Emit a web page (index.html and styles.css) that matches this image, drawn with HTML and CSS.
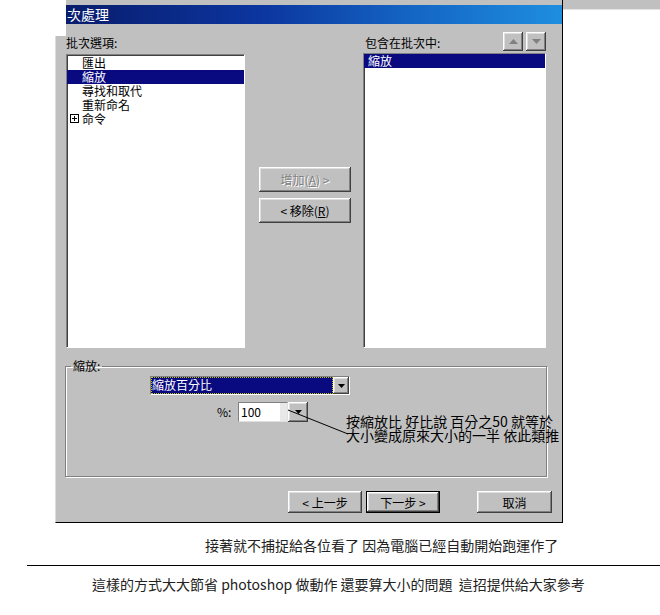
FILE: index.html
```html
<!DOCTYPE html>
<html lang="zh-Hant">
<head>
    <meta charset="UTF-8">
    <title>批次處理</title>
    <link rel="stylesheet" href="styles.css">
</head>
<body>
    <div class="screen">
        <div class="top">
            <div class="dialog">
                <div class="notch"></div>
                <div class="titlebar">次處理</div>
                <div class="dialog-body">
                    <div class="lists">
                        <div class="col">
                            <div class="label">批次選項:</div>
                            <ul class="listbox list-left">
                                <li>匯出</li>
                                <li class="selected">縮放</li>
                                <li>尋找和取代</li>
                                <li>重新命名</li>
                                <li class="group">
                                    <svg class="plus" width="9" height="9" viewBox="0 0 9 9">
                                        <rect x="0.5" y="0.5" width="8" height="8" fill="#fff" stroke="#000"/>
                                        <path d="M2 4.5h5M4.5 2v5" stroke="#000"/>
                                    </svg>命令
                                </li>
                            </ul>
                        </div>
                        <div class="col middle">
                            <button class="btn disabled">增加(<u>A</u>) &gt;</button>
                            <button class="btn">&lt; 移除(<u>R</u>)</button>
                        </div>
                        <div class="col">
                            <div class="list-head">
                                <span class="label">包含在批次中:</span>
                                <div class="arrows">
                                    <button class="arrow-btn">
                                        <svg width="9" height="5" viewBox="0 0 9 5"><path d="M0 5L4.5 0L9 5Z" fill="#808080"/></svg>
                                    </button>
                                    <button class="arrow-btn">
                                        <svg width="9" height="5" viewBox="0 0 9 5"><path d="M0 0L9 0L4.5 5Z" fill="#808080"/></svg>
                                    </button>
                                </div>
                            </div>
                            <ul class="listbox list-right">
                                <li class="selected">縮放</li>
                            </ul>
                        </div>
                    </div>

                    <fieldset class="group-box">
                        <legend>縮放:</legend>
                        <div class="combo">
                            <div class="combo-value">縮放百分比</div>
                            <div class="drop-btn">
                                <svg width="7" height="4" viewBox="0 0 7 4"><path d="M0 0H7L3.5 4Z" fill="#000"/></svg>
                            </div>
                        </div>
                        <div class="percent-row">
                            <span class="percent-label">%:</span>
                            <div class="input">100</div>
                            <div class="drop-btn spin">
                                <svg width="7" height="4" viewBox="0 0 7 4"><path d="M0 0H7L3.5 4Z" fill="#000"/></svg>
                            </div>
                            <svg class="pointer" width="70" height="30" viewBox="0 0 70 30">
                                <line x1="0" y1="1" x2="60" y2="25" stroke="#000" stroke-width="1"/>
                            </svg>
                            <div class="note">
                                <div>按縮放比 好比說 百分之50 就等於</div>
                                <div>大小變成原來大小的一半 依此類推</div>
                            </div>
                        </div>
                    </fieldset>

                    <div class="footer-buttons">
                        <button class="btn wide">&lt; 上一步</button>
                        <button class="btn wide default">下一步 &gt;</button>
                        <button class="btn wide cancel">取消</button>
                    </div>
                </div>
            </div>
            <div class="right-strip"><div class="strip"></div></div>
        </div>

        <p class="caption">接著就不捕捉給各位看了 因為電腦已經自動開始跑運作了</p>
        <hr class="divider">
        <p class="caption second">這樣的方式大大節省 photoshop 做動作 還要算大小的問題&nbsp; 這招提供給大家參考</p>
    </div>
</body>
</html>
```

FILE: styles.css
```css
/* General */
body {
    margin: 0;
    background-color: #fff;
    font-family: "Noto Sans CJK TC", "Liberation Sans", sans-serif;
    color: #000;
}

.screen {
    width: 660px;
    height: 615px;
    overflow: hidden;
}

.top {
    display: flex;
    align-items: flex-start;
}

/* Dialog window */
.dialog {
    position: relative;
    width: 508px;
    margin-left: 55px;
    box-sizing: border-box;
    padding-top: 5px;
    background-color: #c0c0c0;
    border-left: 1px solid #dcdcdc;
    border-right: 1px solid #000;
    border-bottom: 1px solid #000;
    font-size: 12px;
}

.notch {
    position: absolute;
    top: 0;
    left: -1px;
    width: 11px;
    height: 36px;
    background-color: #fff;
}

.titlebar {
    margin-left: 10px;
    height: 19px;
    line-height: 19px;
    padding-left: 1px;
    background: linear-gradient(90deg, #081c6c 0%, #0c36a0 40%, #1466c4 70%, #1e8ee0 100%);
    color: #fff;
    font-size: 14px;
}

.dialog-body {
    padding: 8px 16px 9px 10px;
}

/* Lists */
.lists {
    display: grid;
    grid-template-columns: 179px 118px 183px;
}

.label {
    display: block;
    padding: 4px 0;
    line-height: 14px;
}

.listbox {
    list-style: none;
    margin: 0;
    padding: 0;
    background-color: #fff;
    border: 1px solid;
    border-color: #808080 #fff #fff #808080;
    box-shadow: inset 1px 1px 0 #404040;
}

.listbox li {
    line-height: 14px;
    height: 14px;
    white-space: nowrap;
}

.listbox li.selected {
    background-color: #0a0a80;
    color: #fff;
}

.list-left {
    height: 294px;
    box-sizing: border-box;
    padding-top: 1px;
}

.list-left li {
    padding-left: 15px;
}

.list-left li.group {
    position: relative;
}

.list-left .plus {
    position: absolute;
    left: 3px;
    top: 2px;
}

.list-right {
    height: 295px;
    box-sizing: border-box;
}

.list-right li {
    padding-left: 4px;
}

.list-head {
    display: flex;
    justify-content: space-between;
    height: 21px;
}

.list-head .label {
    padding-left: 2px;
}

.arrows {
    display: flex;
    gap: 3px;
}

/* Buttons */
.btn,
.arrow-btn,
.drop-btn {
    box-sizing: border-box;
    background-color: #c0c0c0;
    border: none;
    box-shadow: inset -1px -1px 0 #404040, inset 1px 1px 0 #fff,
                inset -2px -2px 0 #808080, inset 2px 2px 0 #dfdfdf;
    font-family: inherit;
    font-size: 12px;
    color: #000;
    padding: 0;
}

.arrow-btn {
    width: 20px;
    height: 19px;
    display: flex;
    align-items: center;
    justify-content: center;
}

.middle {
    display: flex;
    flex-direction: column;
    gap: 6px;
    padding: 135px 0 0 14px;
}

.middle .btn {
    width: 92px;
    height: 25px;
}

.btn.disabled {
    color: #808080;
    text-shadow: 1px 1px 0 #fff;
}

/* Group box */
.group-box {
    margin: 11px 0 0 -1px;
    padding: 0;
    width: 482px;
    height: 118px;
    box-sizing: border-box;
    border: 1px solid #808080;
    box-shadow: 1px 1px 0 #fff, inset 1px 1px 0 #fff;
}

.group-box legend {
    margin-left: 5px;
    padding: 0 2px;
    line-height: 14px;
}

.combo {
    display: flex;
    width: 200px;
    height: 19px;
    margin: 3px 0 0 84px;
    box-sizing: border-box;
    border: 1px solid;
    border-color: #808080 #fff #fff #808080;
    background-color: #fff;
}

.combo-value {
    flex: 1;
    background-color: #0a0a80;
    color: #fff;
    line-height: 15px;
    padding-left: 1px;
    outline: 1px dotted #c0c000;
    outline-offset: -1px;
}

.drop-btn {
    width: 16px;
    display: flex;
    align-items: center;
    justify-content: center;
}

.percent-row {
    position: relative;
    display: flex;
    height: 20px;
    margin-top: 7px;
    padding-left: 151px;
}

.percent-label {
    width: 21px;
    line-height: 20px;
}

.input {
    width: 50px;
    box-sizing: border-box;
    border: 1px solid;
    border-color: #808080 #dfdfdf #dfdfdf #808080;
    background: linear-gradient(90deg, #fff 85%, #e8e8e8 85%);
    line-height: 18px;
    padding-left: 2px;
}

.spin {
    width: 20px;
}

.pointer {
    position: absolute;
    left: 222px;
    top: 7px;
}

.note {
    position: absolute;
    left: 280px;
    top: 12px;
    font-size: 14px;
    line-height: 14px;
    white-space: nowrap;
}

/* Footer buttons */
.footer-buttons {
    display: flex;
    gap: 4px;
    margin: 14px -6px 0 0;
    padding-left: 222px;
}

.btn.wide {
    flex-shrink: 0;
    width: 74px;
    height: 22px;
}

.btn.default {
    border: 1px solid #000;
}

.btn.cancel {
    width: 75px;
    margin-left: 33px;
}

/* Right side strip */
.right-strip {
    flex: 1;
}

.strip {
    height: 9px;
    background-color: #c0c0c0;
    border-bottom: 1px solid #e4e4e4;
}

/* Captions below the dialog */
.caption {
    margin: 14px 0 0;
    padding-left: 205px;
    font-size: 14px;
    line-height: 16px;
    color: #222;
    white-space: nowrap;
}

.divider {
    margin: 12px 0 0 27px;
    border: none;
    border-top: 1px solid #000;
}

.caption.second {
    margin-top: 10px;
    padding-left: 92px;
}
```
